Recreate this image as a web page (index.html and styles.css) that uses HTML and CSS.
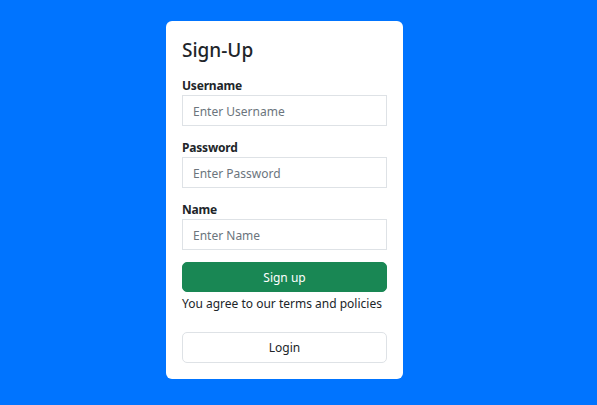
FILE: index.html
```html
<!DOCTYPE html>
<html lang="en">
<head>
    <meta charset="UTF-8">
    <meta name="viewport" content="width=device-width, initial-scale=1.0">
    <title>Sign-Up</title>
    <link rel="stylesheet" href="styles.css">
</head>
<body>
    <div class="page">
        <div class="signup-card">
            <h2>Sign-Up</h2>
            <form>
                <div class="form-group">
                    <label for="username">Username</label>
                    <input type="text" id="username" name="username" placeholder="Enter Username">
                </div>
                <div class="form-group">
                    <label for="password">Password</label>
                    <input type="password" id="password" name="password" placeholder="Enter Password">
                </div>
                <div class="form-group">
                    <label for="name">Name</label>
                    <input type="text" id="name" name="name" placeholder="Enter Name">
                </div>
                <button type="submit" class="btn btn-success">Sign up</button>
                <p class="terms">You agree to our terms and policies</p>
                <button type="button" class="btn btn-light">Login</button>
            </form>
        </div>
    </div>
</body>
</html>
```

FILE: styles.css
```css
html, body {
    margin: 0;
    height: 100%;
}
body {
    font-family: "Noto Sans", "Open Sans", sans-serif;
    font-size: 12px;
    line-height: 19px;
    color: #212529;
    background-color: #0074ff;
}
.page {
    display: flex;
    justify-content: center;
    align-items: flex-start;
    padding: 21px 28px 0 0;
}
.signup-card {
    width: 205px;
    padding: 16px;
    background: white;
    border-radius: 6px;
}
h2 {
    margin: 0 0 14px;
    padding-top: 2px;
    font-size: 19px;
    font-weight: 500;
    line-height: 23px;
}
.form-group {
    margin-bottom: 12px;
}
label {
    display: block;
    padding-top: 1px;
    line-height: 18px;
    font-weight: bold;
    letter-spacing: -0.2px;
}
input {
    display: block;
    width: 100%;
    height: 31px;
    padding: 1px 10px 0;
    font-family: inherit;
    font-size: 12px;
    color: #212529;
    border: 1px solid #dee2e6;
    border-radius: 0;
    box-sizing: border-box;
}
input::placeholder {
    color: #6c757d;
}
.btn {
    display: block;
    width: 100%;
    height: 30px;
    font-family: inherit;
    font-size: 12px;
    border-radius: 5px;
    cursor: pointer;
}
.btn-success {
    background-color: #198754;
    color: white;
    border: 1px solid #198754;
}
.btn-light {
    height: 31px;
    background-color: white;
    color: #212529;
    border: 1px solid #dee2e6;
}
.terms {
    margin: 2px 0 19px;
}
```
